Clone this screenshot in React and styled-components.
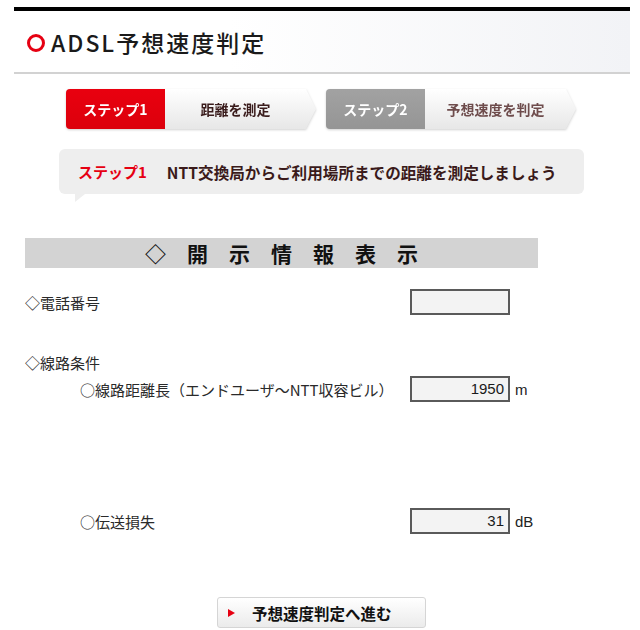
import styled, { createGlobalStyle } from "styled-components";

const GlobalStyle = createGlobalStyle`
  body {
    margin: 0;
    background: #fff;
    font-family: "Noto Sans CJK JP", "Noto Sans", sans-serif;
    color: #222;
  }
`;

const Step = ({ active, num, label }) => (
  <StepBox>
    <StepNum $active={active}>ステップ{num}</StepNum>
    <StepBody $active={active}>{label}</StepBody>
  </StepBox>
);

const ValueRow = ({ label, value, unit, mt }) => (
  <Row $mt={mt}>
    <SubLabel>{label}</SubLabel>
    <Field>{value}</Field>
    <Unit>{unit}</Unit>
  </Row>
);

export default function App() {
  return (
    <Page>
      <GlobalStyle />
      <Header>
        <Ring />
        <Title>ADSL予想速度判定</Title>
      </Header>

      <Steps>
        <Step active num="1" label="距離を測定" />
        <Step num="2" label="予想速度を判定" />
      </Steps>

      <Bubble>
        <BubbleStep>ステップ1</BubbleStep>
        <BubbleText>NTT交換局からご利用場所までの距離を測定しましょう</BubbleText>
      </Bubble>

      <SectionBar>◇　開　示　情　報　表　示</SectionBar>

      <Form>
        <Row $mt={21}>
          <Label>◇電話番号</Label>
          <Field />
        </Row>
        <Row $mt={37} $short>
          <Label>◇線路条件</Label>
        </Row>
        <ValueRow
          mt={4}
          label="○線路距離長（エンドユーザ〜NTT収容ビル）"
          value="1950"
          unit="m"
        />
        <ValueRow mt={106} label="○伝送損失" value="31" unit="dB" />
      </Form>

      <NextButton>
        <Arrow />
        <span>予想速度判定へ進む</span>
      </NextButton>
    </Page>
  );
}

const Page = styled.div`
  width: 640px;
  padding-top: 7px;
`;

const Header = styled.div`
  margin: 0 10px 0 14px;
  height: 61px;
  border-top: 4px solid #000;
  border-bottom: 2px solid #d2d2d2;
  background: linear-gradient(to right, #fff 35%, #f2f3f6 100%);
  display: flex;
  align-items: center;
  padding-left: 13px;
`;

const Ring = styled.div`
  width: 12px;
  height: 12px;
  border: 3.5px solid #e60012;
  border-radius: 50%;
  margin-top: 2px;
`;

const Title = styled.h1`
  margin: 0 0 0 6px;
  font-size: 23px;
  font-weight: 500;
  letter-spacing: 2px;
  color: #1a1a1a;
`;

const Steps = styled.div`
  display: flex;
  gap: 10px;
  margin: 15px 0 0 66px;
`;

const StepBox = styled.div`
  display: flex;
  height: 40px;
  filter: drop-shadow(0 1px 1px rgba(0, 0, 0, 0.18));
`;

const StepNum = styled.div`
  width: 99px;
  display: flex;
  align-items: center;
  justify-content: center;
  border-radius: 4px 0 0 4px;
  background: ${(p) =>
    p.$active
      ? "linear-gradient(#e9000f, #dc000c)"
      : "linear-gradient(#a2a2a2, #959595)"};
  color: #fff;
  font-size: 14px;
  font-weight: 700;
`;

const StepBody = styled.div`
  width: 151px;
  padding-right: 10px;
  box-sizing: border-box;
  display: flex;
  align-items: center;
  justify-content: center;
  background: linear-gradient(#ffffff, #e7e7e7);
  clip-path: polygon(0 0, calc(100% - 10px) 0, 100% 50%, calc(100% - 10px) 100%, 0 100%);
  color: ${(p) => (p.$active ? "#3a1c1c" : "#6e4c4c")};
  font-size: 14px;
  font-weight: 700;
`;

const Bubble = styled.div`
  position: relative;
  margin: 20px 0 0 59px;
  width: 525px;
  height: 45px;
  box-sizing: border-box;
  padding-left: 19px;
  border-radius: 6px;
  background: #eeeeee;
  display: flex;
  align-items: center;
  gap: 20px;
  font-weight: 700;

  &::after {
    content: "";
    position: absolute;
    left: 16px;
    top: 100%;
    width: 10px;
    height: 8px;
    background: #eeeeee;
    clip-path: polygon(0 0, 100% 0, 0 100%);
  }
`;

const BubbleStep = styled.span`
  color: #e60012;
  font-size: 15px;
`;

const BubbleText = styled.span`
  color: #3a1a1a;
  font-size: 15.6px;
`;

const SectionBar = styled.div`
  margin: 44px 0 0 25px;
  width: 513px;
  height: 30px;
  background: #d3d3d3;
  text-align: center;
  line-height: 30px;
  font-size: 21px;
  font-weight: 700;
  color: #111;
`;

const Form = styled.div`
  padding-left: 25px;
  display: flex;
  flex-direction: column;
`;

const Row = styled.div`
  display: flex;
  align-items: center;
  height: ${(p) => (p.$short ? "20px" : "26px")};
  margin-top: ${(p) => p.$mt}px;
`;

const Label = styled.div`
  width: 385px;
  font-size: 15px;
  font-weight: 400;
  color: #2a2a2a;
`;

const SubLabel = styled(Label)`
  padding-left: 55px;
  box-sizing: border-box;
`;

const Field = styled.div`
  width: 100px;
  height: 26px;
  box-sizing: border-box;
  border: 2px solid #5a5a5a;
  background: #f3f3f3;
  padding-right: 4px;
  text-align: right;
  font-family: "Liberation Sans", Arial, sans-serif;
  font-size: 15px;
  line-height: 22px;
  color: #1a1a1a;
`;

const Unit = styled.span`
  margin-left: 5px;
  font-family: "Liberation Sans", Arial, sans-serif;
  font-size: 15px;
  color: #222;
`;

const NextButton = styled.div`
  margin: 63px 0 0 217px;
  width: 209px;
  height: 31px;
  box-sizing: border-box;
  border: 1px solid #d5d5d5;
  border-radius: 3px;
  background: linear-gradient(#ffffff, #ebebeb);
  display: flex;
  align-items: center;
  padding-left: 10px;
  font-size: 15.5px;
  font-weight: 700;
  color: #111;
  gap: 17px;
`;

const Arrow = styled.span`
  width: 0;
  height: 0;
  border-top: 4px solid transparent;
  border-bottom: 4px solid transparent;
  border-left: 7px solid #e60012;
`;
